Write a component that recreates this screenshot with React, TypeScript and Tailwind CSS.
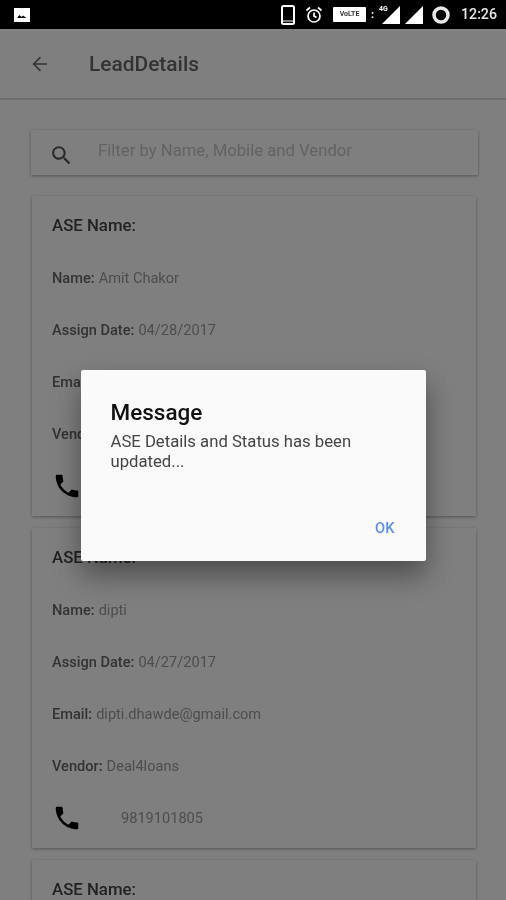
import { ArrowLeft } from 'lucide-react'

const LEADS = [
  { name: 'Amit Chakor', date: '04/28/2017', email: 'amit@gmail.com', vendor: 'Deal4loans', mobile: '9819101805' },
  { name: 'dipti', date: '04/27/2017', email: 'dipti.dhawde@gmail.com', vendor: 'Deal4loans', mobile: '9819101805' },
  { name: 'Rahul', date: '04/27/2017', email: 'rahul@gmail.com', vendor: 'Deal4loans', mobile: '9819101805' },
]

function PhoneIcon() {
  return (
    <svg viewBox="0 0 24 24" className="w-[30px] h-[30px] fill-black">
      <path d="M6.62 10.79c1.44 2.83 3.76 5.14 6.59 6.59l2.2-2.2c.27-.27.67-.36 1.02-.24 1.12.37 2.33.57 3.57.57.55 0 1 .45 1 1V20c0 .55-.45 1-1 1-9.39 0-17-7.61-17-17 0-.55.45-1 1-1h3.5c.55 0 1 .45 1 1 0 1.25.2 2.45.57 3.57.11.35.03.74-.25 1.02l-2.2 2.2z" />
    </svg>
  )
}

function SearchIcon() {
  return (
    <svg viewBox="0 0 24 24" className="w-[25px] h-[25px] ml-[18px] mt-[6px] fill-[#555555]">
      <path d="M15.5 14h-.79l-.28-.27C15.41 12.59 16 11.11 16 9.500 16 5.910 13.090 3 9.500 3S3 5.910 3 9.500 5.910 16 9.500 16c1.610 0 3.090-.59 4.230-1.570l.27.28v.79l5 4.990L20.490 19l-4.990-5zm-6 0C7.010 14 5 11.990 5 9.500S7.010 5 9.500 5 14 7.010 14 9.500 11.990 14 9.500 14z" />
    </svg>
  )
}

function Row({ label, value }: { label: string; value: string }) {
  return (
    <div className="h-[52px] pt-[2px] flex items-center text-[14.6px] text-[#9a9a9a]">
      <span className="font-medium text-[#666666] mr-1">{label}:</span>
      {value}
    </div>
  )
}

function StatusBar() {
  return (
    <div className="relative z-20 h-[29px] bg-black flex items-center text-white">
      <svg viewBox="0 0 16 16" className="w-[16px] h-[16px] ml-[14px] fill-white">
        <path d="M0 1h16v14H0z" />
        <path d="M3 11l2.500-3 2 2 1.500-1.500L12.500 11z" fill="#000" />
      </svg>
      <div className="ml-auto flex items-center">
        <svg viewBox="0 0 14 20" className="w-[14px] h-[20px]">
          <rect x="1" y="1" width="12" height="18" rx="1.500" fill="none" stroke="#fff" strokeWidth="2" />
          <path d="M1 16h12" stroke="#fff" strokeWidth="1" />
        </svg>
        <svg viewBox="0 0 18 18" className="w-[18px] h-[18px] ml-[10px]" fill="none" stroke="#fff" strokeWidth="1.700">
          <circle cx="9" cy="10" r="6" />
          <path d="M9 6.500V10l2.500 1.500M1.500 4.500L5 1.500M16.500 4.500L13 1.500" />
        </svg>
        <div className="ml-[10px] w-[33px] h-[15px] bg-white rounded-[1px] flex items-center justify-center text-[7px] leading-none font-bold text-[#333333]">
          VoLTE
        </div>
        <span className="ml-[5px] w-[5px] text-[11px] leading-none font-bold">:</span>
        <div className="relative w-[21px] h-[18px] ml-[3px]">
          <svg viewBox="0 0 18 18" className="absolute right-0 top-0 w-[18px] h-[18px] fill-white">
            <path d="M18 0v18H0z" />
          </svg>
          <span className="absolute left-[0px] -top-[2px] text-[7px] leading-[10px] font-bold">4G</span>
        </div>
        <svg viewBox="0 0 18 18" className="w-[18px] h-[18px] ml-[5px] fill-white">
          <path d="M18 0v18H0z" />
        </svg>
        <svg viewBox="0 0 18 18" className="w-[18px] h-[18px] ml-[9px]" fill="none" stroke="#e8e8e8" strokeWidth="3.500">
          <circle cx="9" cy="9" r="7" />
        </svg>
        <span className="ml-[11px] mr-[9px] text-[14.2px] leading-none font-medium text-[#e8e8e8]">12:26</span>
      </div>
    </div>
  )
}

export default function App() {
  return (
    <div className="relative h-[900px] overflow-hidden bg-white font-['Roboto',sans-serif] blur-[0.5px]">
      <StatusBar />

      <div className="h-[71px] flex items-center border-b-2 border-[#d8d8d8]">
        <ArrowLeft className="w-[22px] h-[22px] ml-[29px] text-[#666666]" strokeWidth={1.800} />
        <span className="ml-[38px] pt-[2px] text-[20.9px] font-medium text-[#666666]">LeadDetails</span>
      </div>

      <div className="ml-[31px] mr-[28px] mt-[30px] h-[45px] flex items-center bg-white shadow-[0_1px_3px_rgba(0,0,0,0.35)]">
        <SearchIcon />
        <span className="ml-[24px] -mt-[4px] text-[16.7px] text-[#c4c4c4]">Filter by Name, Mobile and Vendor</span>
      </div>

      <div className="mt-[21px] ml-[32px] mr-[30px] flex flex-col gap-[12px]">
        {LEADS.map(lead => (
          <div key={lead.name} className="h-[320px] shrink-0 bg-white shadow-[0_1px_3px_rgba(0,0,0,0.35)] pl-[20px]">
            <div className="h-[56px] pt-[17px] text-[16.8px] leading-[24px] font-medium text-[#444444]">ASE Name:</div>
            <Row label="Name" value={lead.name} />
            <Row label="Assign Date" value={lead.date} />
            <Row label="Email" value={lead.email} />
            <Row label="Vendor" value={lead.vendor} />
            <div className="h-[52px] flex items-center">
              <PhoneIcon />
              <span className="ml-[39px] pt-[2px] text-[14.6px] text-[#9a9a9a]">{lead.mobile}</span>
            </div>
          </div>
        ))}
      </div>

      <div className="absolute inset-0 z-10 bg-black/50 flex justify-center items-start pt-[370px]">
        <div className="w-[345px] h-[191px] bg-[#fafafa] rounded-[2px] shadow-[0_14px_28px_rgba(0,0,0,0.4)] flex flex-col px-[30px]">
          <div className="mt-[27px] text-[22.5px] leading-[30px] font-medium text-[#111111]">Message</div>
          <div className="mt-[5px] text-[16.7px] leading-[20px] text-[#444444]">
            ASE Details and Status has been updated...
          </div>
          <div className="mt-auto mb-[24px] pr-[1px] text-right text-[14.7px] leading-[18px] font-medium text-[#5a8fe6]">OK</div>
        </div>
      </div>
    </div>
  )
}
